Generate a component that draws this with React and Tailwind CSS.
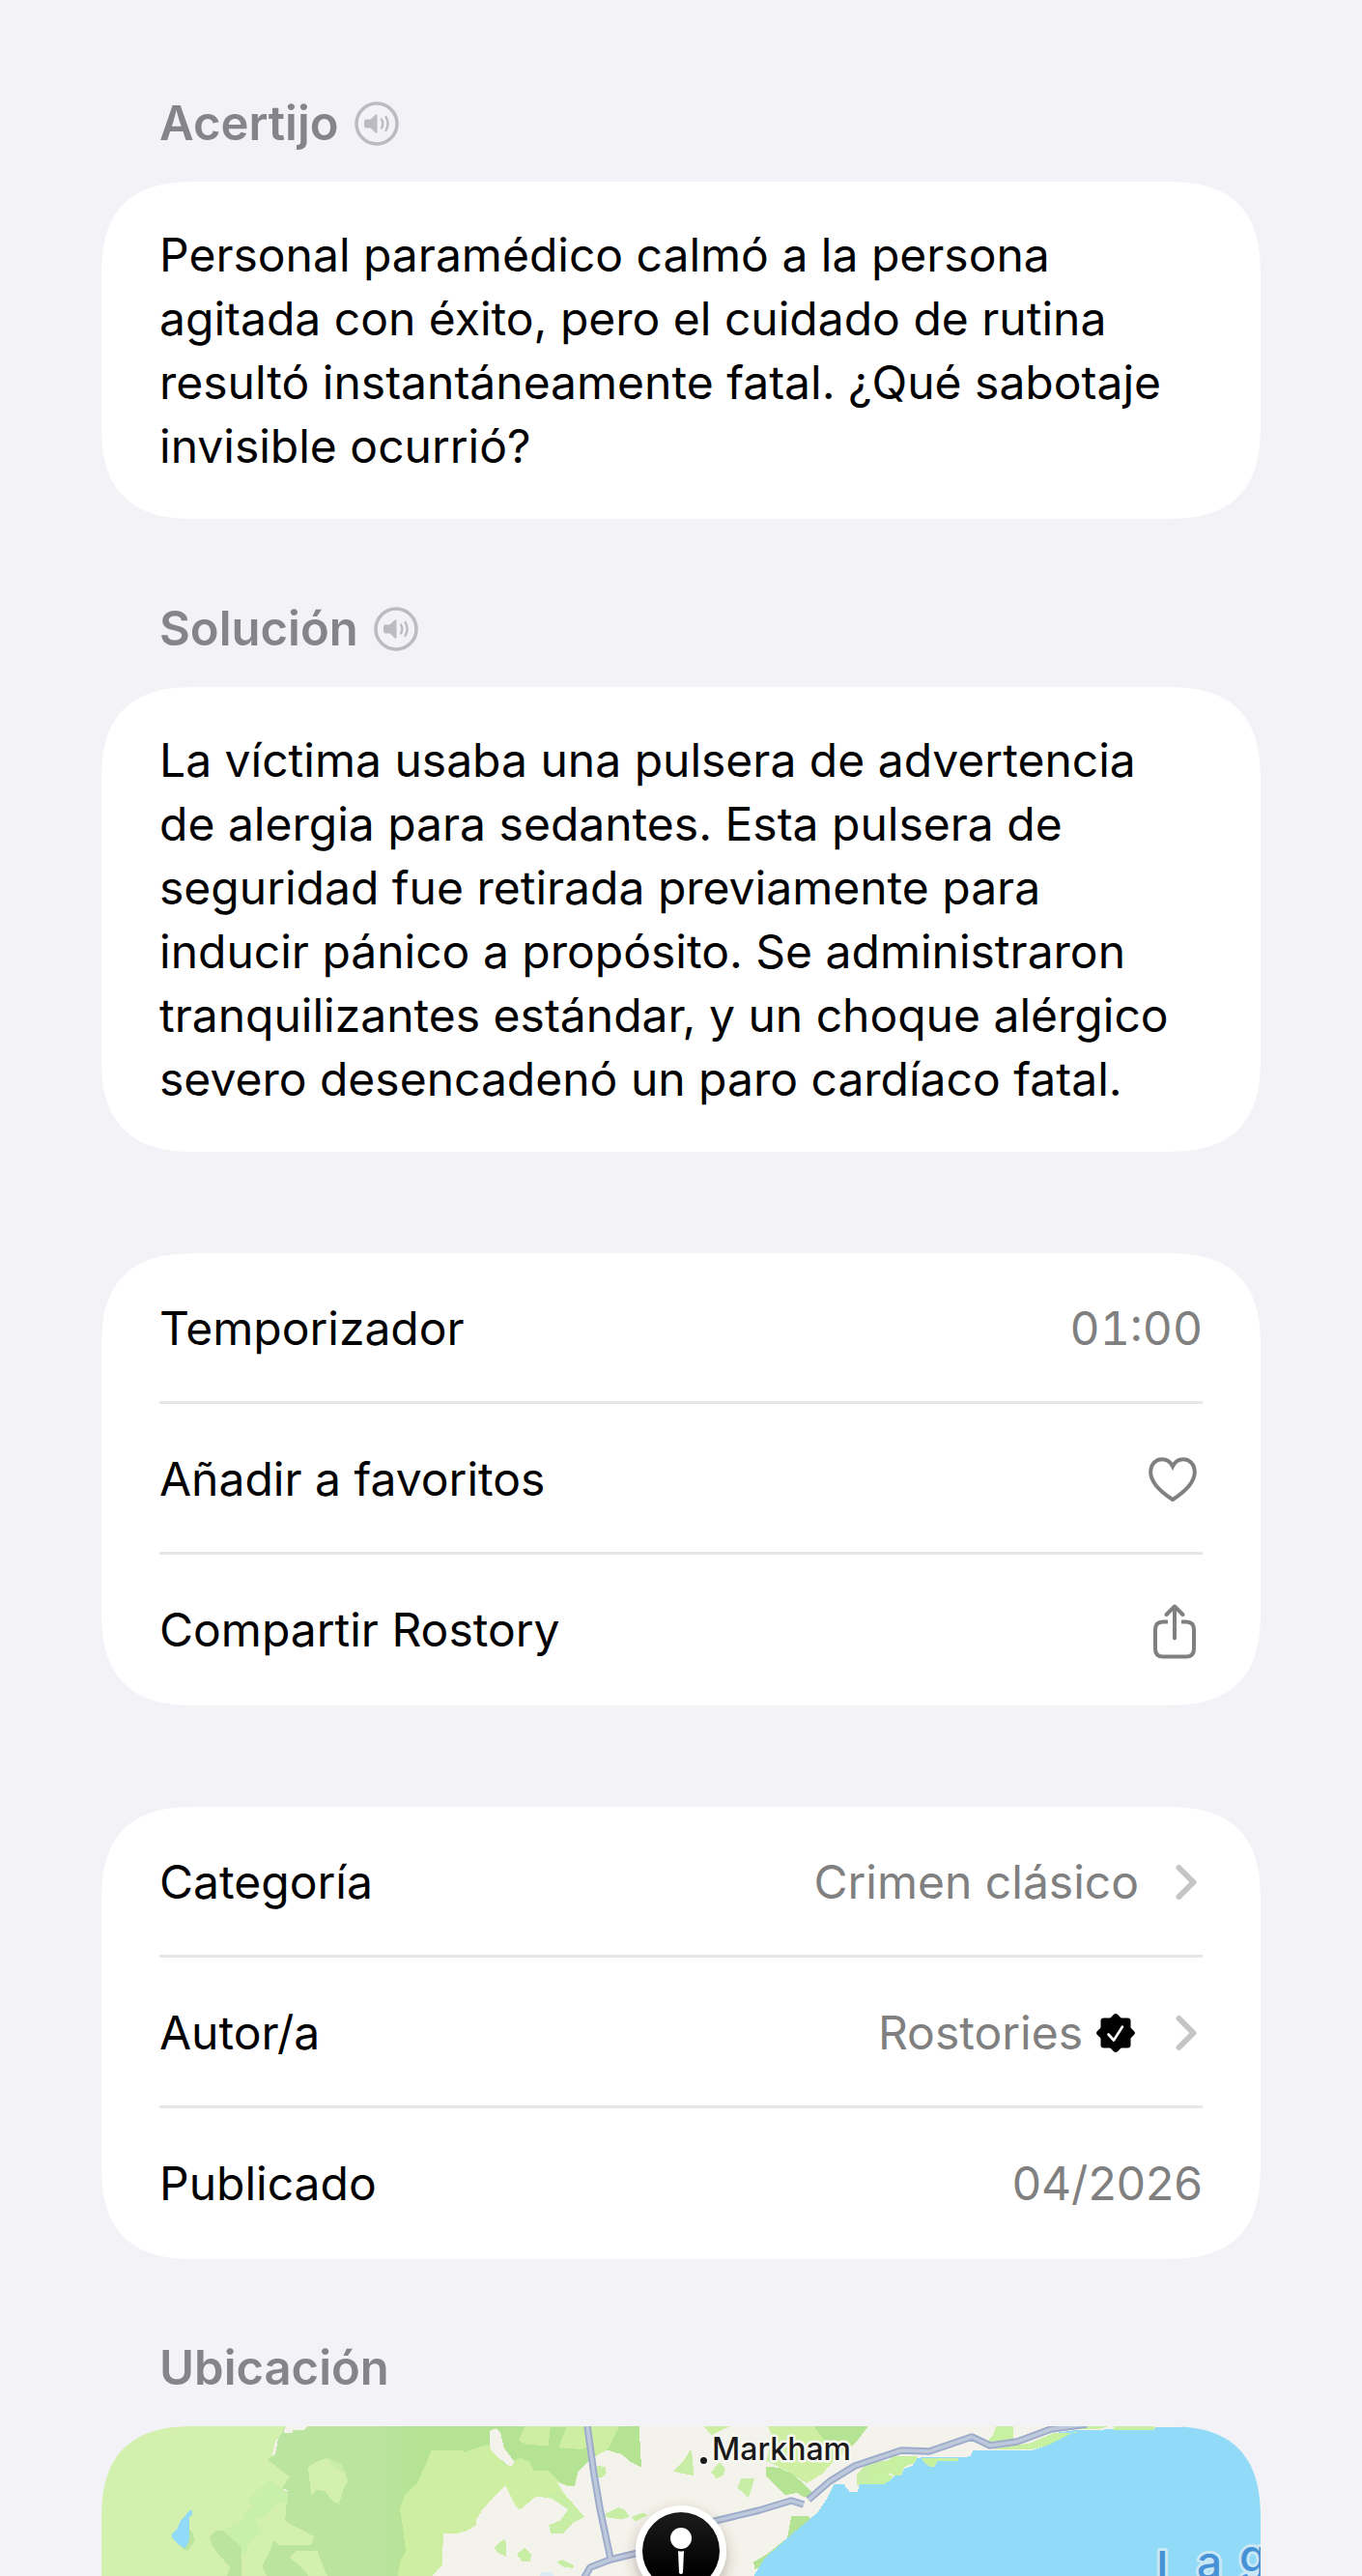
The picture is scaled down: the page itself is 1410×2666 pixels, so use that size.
const card = "bg-white rounded-[100px] [corner-shape:superellipse(1.4)] overflow-hidden";

function SpeakerIcon() {
  return (
    <svg viewBox="0 0 46 46" className="size-[46px]" fill="none" stroke="#bcbbc1" strokeLinecap="round">
      <circle cx="23" cy="23" r="21" strokeWidth="3.500" />
      <path d="M12 18.500h4.500l5.500-5q1.500-1 1.500 .8v17.400q0 1.800-1.500 .8l-5.500-5H12q-2 0-2-2v-5q0-2 2-2z" fill="#bcbbc1" stroke="none" />
      <path d="M28 18.500q2.600 4.500 0 9M32.500 16q4.200 7 0 14" strokeWidth="2.400" />
    </svg>
  );
}

function SectionHeader({ title, audio }) {
  return (
    <div className="flex items-center gap-4 px-15 mb-[30px]">
      <h2 className="text-[49px] leading-[60px] font-semibold text-[#85848a]">{title}</h2>
      {audio && (
        <button type="button" aria-label={"Escuchar " + title} className="block">
          <SpeakerIcon />
        </button>
      )}
    </div>
  );
}

function TextCard({ children }) {
  return (
    <div className={card + " px-15 pt-[43px] pb-[42px]"}>
      <p className="text-[48px] leading-[66px] text-black">{children}</p>
    </div>
  );
}

function RowList({ children }) {
  return <div className={card + " px-15"}>{children}</div>;
}

const rowClass =
  "flex w-full h-[156px] pt-[3px] items-center justify-between border-b-[3px] border-[#e6e6e6] last:border-transparent text-[48px] leading-[66px] text-black text-left";

function HeartIcon() {
  return (
    <svg viewBox="0 0 50 46" className="w-[50px] h-[46px] mr-[6px]" fill="none" stroke="#808080" strokeWidth="4">
      <path d="M25 44C11 35 2.200 25.500 2.200 15.500C2.200 7.500 7.500 2.200 14 2.200C18.700 2.200 22.700 5 25 9.500C27.300 5 31.300 2.200 36 2.200C42.500 2.200 47.800 7.500 47.800 15.500C47.800 25.500 39 35 25 44Z" />
    </svg>
  );
}

function ShareIcon() {
  return (
    <svg viewBox="0 -3 46 61" className="w-[46px] h-[61px] mr-[6px]" fill="none" stroke="#808080" strokeWidth="4">
      <path d="M16 18.500H11Q3 18.500 3 26.500V46.500Q3 54.500 11 54.500H35Q43 54.500 43 46.500V26.500Q43 18.500 35 18.500H30" />
      <path d="M23 35.500V3M14.500 11L23 2.500L31.500 11" strokeLinecap="round" strokeLinejoin="round" />
    </svg>
  );
}

function Chevron() {
  return (
    <svg viewBox="0 0 22 38" className="w-[22px] h-[38px] ml-[38px] mr-[6px]" fill="none" stroke="#c5c5c7" strokeWidth="6" strokeLinecap="round" strokeLinejoin="round">
      <path d="M3.500 4L18.500 19L3.500 34" />
    </svg>
  );
}

function VerifiedIcon() {
  return (
    <svg viewBox="0 0 40 40" className="size-[40px] ml-[14px] mr-1" role="img" aria-label="Verificado">
      <g fill="#000" stroke="#000" strokeWidth="6" strokeLinejoin="round">
        <rect x="7.500" y="7.500" width="25" height="25" />
        <path d="M20 3.200L36.800 20L20 36.800L3.200 20Z" />
      </g>
      <path d="M12.500 21.500L18 27.500L27 13.500" fill="none" stroke="#fff" strokeWidth="2.600" strokeLinecap="round" strokeLinejoin="round" />
    </svg>
  );
}

const roads =
  "M503 0L510 50L516 85L527 137M498 160L506 146L527 138L560 130L631 99L681 87L714 77L727 81M732 76L754 57L780 41L828 25L857 26L901 11L920 20L948 16L983 3L1020 -2";

function MapView() {
  return (
    <svg viewBox="0 0 1200 155" preserveAspectRatio="xMidYMin slice" className="block w-full h-[155px]" role="img" aria-label="Mapa cerca de Markham">
      <defs>
        <linearGradient id="forest" x1="0" x2="1">
          <stop offset="0.500" stopColor="#bce4a1" />
          <stop offset="0.720" stopColor="#b5e394" />
        </linearGradient>
        <linearGradient id="pin" x1="0" x2="0" y1="0" y2="1">
          <stop offset="0" stopColor="#1c1c1c" />
          <stop offset="0.800" stopColor="#000" />
        </linearGradient>
        <filter id="shadow" x="-50%" y="-50%" width="200%" height="200%">
          <feDropShadow dx="0" dy="6" stdDeviation="7" floodColor="#5a3030" floodOpacity="0.350" />
        </filter>
      </defs>
      <rect width="1200" height="155" fill="#f3f3eb" />

      <g transform="translate(-15 -31) scale(0.33333)" shapeRendering="crispEdges">
        <path d="M45 93H615L606 114L585 140L575 185L560 196L630 250L606 285L624 300V560H45Z" fill="#d3f0ae" />
        <path d="M615 93L606 114L594 130L585 180L560 196L630 250L606 285L624 292L615 390L705 435L697 461H595L580 445L568 480L544 530L560 560H1210V93H685L675 105H640V114H612Z" fill="url(#forest)" />
        <path d="M624 392L705 435L697 461H595L585 448L606 380Z" fill="#d3f0ae" />
        <path d="M568 255L606 290L624 295V330H590L570 355L545 378L520 375L530 400L545 417L520 440L500 465L492 497L480 475L455 450L425 415L480 385L490 360L515 345L503 318Z" fill="#c9efac" />
        <path d="M381 438L399 417H425L480 470V560H435L444 530L408 490L390 465Z" fill="#bce4a1" />
        <path d="M687 220L712 204L745 192L790 210L802 235L810 264L798 285L782 335L760 322L738 293L712 292L697 308Z" fill="#d3f0ae" />
        <path d="M740 194L790 210L802 240L770 222Z" fill="#c7eda6" />
        <path d="M630 500L650 480H715L724 505L747 560H690L665 530Z" fill="#d3f0ae" />
        <path d="M1070 168H1210V405L1180 417L1150 426H1107V525L1075 560H965L972 515L990 480L980 400L972 350L985 310L1025 270L1048 220Z" fill="#ceefa1" />
        <path d="M1210 400L1180 417L1150 426H1107L1103 525L1070 560H1210Z" fill="#f3f3eb" />
        <path d="M318 385V415L327 420L335 450L312 480L295 470Z" fill="#bce4a1" />
        <path d="M318 354H327V368L318 375V445L306 472L290 465L264 440V427L282 410L291 385L303 375Z" fill="#92dbf8" />
      </g>

      <g transform="translate(375 -31) scale(0.33333)" shapeRendering="crispEdges">
        <path d="M0 93H545L552 220L520 200L490 180L450 165L420 180L380 205L356 232L345 280L325 280L290 265L310 300L345 340L375 375L345 390L310 425H270L265 400L300 385L325 352L275 318L225 310L190 340L175 352L160 338L130 277L95 310L60 350L35 390L15 415L0 417Z" fill="#ceefa1" />
        <path d="M0 93H190L170 138L190 148L262 155L270 95H320L294 160L370 165L400 145H455L485 93H545L552 220L520 205L490 180L440 165L400 190L356 232L343 280L300 270L265 232H218L205 203L175 192L130 215L75 150L0 175Z" fill="#b5e394" />
        <path d="M375 93H480L465 130L452 160L420 178L385 185Z" fill="#ceefa1" />
        <path d="M80 108L100 100L115 115L125 160L158 203L148 218L130 210L95 178L80 160Z" fill="#f3f3eb" />
        <path d="M290 290L375 375L345 390L310 425H270L265 400L300 385L325 352L265 312Z" fill="#c8eea5" />
        <path d="M415 215L440 220L443 240L430 252H412ZM440 365L480 345L500 352L515 375L490 382L440 375ZM520 375L555 362L572 370L535 388ZM95 470L125 443L131 455V498L105 485ZM165 490L190 470L210 490L207 512L180 512ZM290 515L305 507L343 525L340 534L310 530ZM705 165L711 190L714 246L680 240L652 233L680 205ZM768 235L795 205L812 225L806 245L785 255ZM850 285L862 255H903L893 290L884 317L870 300Z" fill="#c8eea5" />
        <path d="M745 93H830L800 105L770 120Z" fill="#ceefa1" />
        <path d="M945 93H1256L1225 135L1190 170L1140 210L1115 240L1065 270L1000 230L940 200L960 130Z" fill="#ceefa1" />
        <path d="M1088 93H1256L1225 135L1190 170L1160 160L1115 130Z" fill="#b5e394" />
        <path d="M940 218L980 222L1020 240L1060 275L1085 300L1060 315L1035 300L1000 307L960 270L940 250Z" fill="#b5e394" />
        <path d="M1222 265V240L1260 205L1320 200V265L1300 275H1222Z" fill="#c8eea5" />
        <path d="M1018 372H1070L1085 385L1000 445L940 510L905 540L900 515L945 488L1005 440Z" fill="#b5e394" />
        <path d="M240 545H270L280 560H235Z" fill="#dcebf5" />
        <path d="M1320 264L1300 273H1230L1222 298H1200L1180 273H1150L1130 315L1100 360L1065 390L1040 410L1000 445L960 480L930 510L900 560H1320Z" fill="#92dbf8" />
      </g>

      <g transform="translate(795 -31) scale(0.33333)" shapeRendering="crispEdges">
        <path d="M0 273H45L63 262L81 245H99L108 225L135 215L145 192L162 190H295L315 185L322 168H505L555 152L570 115L640 105H690L1010 93H1300V560H0Z" fill="#92dbf8" />
        <path d="M0 215L30 225L45 240L75 248L63 262L45 273H0ZM35 210L80 185H150L143 205L108 220L99 245H75L35 222ZM162 192H277V200H212L204 218H188L170 206ZM365 140L385 120L393 93H447V140L400 145ZM375 166L500 145L570 115H642V108L555 152L505 165ZM640 93H745L712 102L660 103ZM758 93H885V104H758Z" fill="#c7f0a0" />
      </g>

      <g fill="none" strokeLinejoin="bevel">
        <path d={roads} stroke="#9daccb" strokeWidth="7.500" />
        <path d={roads} stroke="#bfc9dc" strokeWidth="3.500" />
      </g>

      <g filter="url(#shadow)">
        <circle cx="600" cy="129" r="47" fill="#fff" />
      </g>
      <circle cx="600" cy="129" r="40" fill="url(#pin)" />
      <circle cx="600" cy="116" r="11" fill="#fff" />
      <path d="M597 129Q600 130 603 129L602 152Q600 154 598 152Z" fill="#fff" />

      <circle cx="623.500" cy="35.500" r="4.500" fill="#1a1a1a" stroke="#f8f8f3" strokeWidth="2" />
      <text x="632" y="35" fontSize="32" fontWeight="500" fill="#1a1a1a" stroke="#f8f8f3" strokeWidth="5" strokeLinejoin="round" paintOrder="stroke">Markham</text>
      <g fontSize="46" fontWeight="500" fill="#4792d6" stroke="#c9e8f5" strokeWidth="6" strokeLinejoin="round" paintOrder="stroke">
        <text x="1092" y="163">L</text>
        <text x="1134" y="157">a</text>
        <text x="1178" y="150">g</text>
      </g>
    </svg>
  );
}

export default function App() {
  return (
    <main className="min-h-screen bg-[#f2f2f7] px-[105px] pt-[98px] font-[Inter,'Liberation_Sans',sans-serif]">
      <section>
        <SectionHeader title="Acertijo" audio />
        <TextCard>
          Personal paramédico calmó a la persona agitada con éxito, pero el cuidado de rutina resultó instantáneamente
          fatal. ¿Qué sabotaje invisible ocurrió?
        </TextCard>
      </section>

      <section className="mt-[84px]">
        <SectionHeader title="Solución" audio />
        <TextCard>
          La víctima usaba una pulsera de advertencia de alergia para sedantes. Esta pulsera de seguridad fue retirada
          previamente para inducir pánico a propósito. Se administraron tranquilizantes estándar, y un choque alérgico
          severo desencadenó un paro cardíaco fatal.
        </TextCard>
      </section>

      <section className="mt-[105px]">
        <RowList>
          <div className={rowClass}>
            <span>Temporizador</span>
            <span className="text-[#808080] tabular-nums">01:00</span>
          </div>
          <button type="button" className={rowClass}>
            <span>Añadir a favoritos</span>
            <HeartIcon />
          </button>
          <button type="button" className={rowClass}>
            <span>Compartir Rostory</span>
            <ShareIcon />
          </button>
        </RowList>
      </section>

      <section className="mt-[105px]">
        <RowList>
          <a href="#categoria" className={rowClass}>
            <span>Categoría</span>
            <span className="flex items-center text-[#808080]">
              Crimen clásico
              <Chevron />
            </span>
          </a>
          <a href="#autor" className={rowClass}>
            <span>Autor/a</span>
            <span className="flex items-center text-[#808080]">
              Rostories
              <VerifiedIcon />
              <Chevron />
            </span>
          </a>
          <div className={rowClass}>
            <span>Publicado</span>
            <span className="text-[#808080]">04/2026</span>
          </div>
        </RowList>
      </section>

      <section className="mt-[83px]">
        <SectionHeader title="Ubicación" />
        <div className="overflow-hidden rounded-t-[100px] [corner-shape:superellipse(1.4)]">
          <MapView />
        </div>
      </section>
    </main>
  );
}
